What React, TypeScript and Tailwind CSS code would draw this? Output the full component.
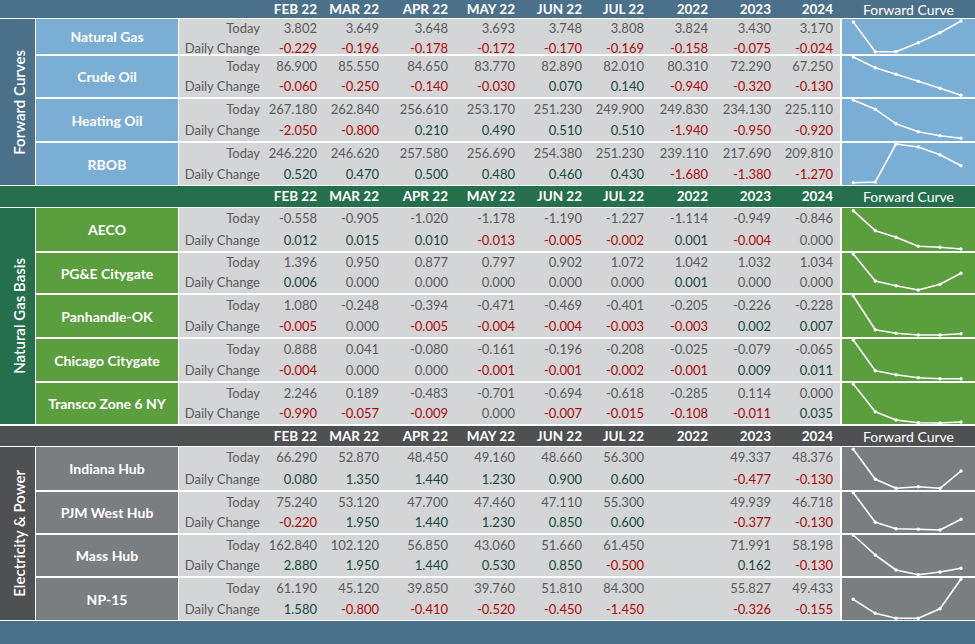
import React from "react";

type Row = {
  name: string;
  h: string;
  today: string[];
  change: string[];
  pts: number[];
};

type Section = {
  title: string;
  headH: string;
  headBg: string;
  nameBg: string;
  rowsGap: string;
  after: string;
  rows: Row[];
};

const COLW = ["w-[57px]", "w-[62px]", "w-[69px]", "w-[67px]", "w-[67px]", "w-[62px]", "w-[64px]", "w-[63px]", "w-[62px]"];
const HEADS = ["FEB 22", "MAR 22", "APR 22", "MAY 22", "JUN 22", "JUL 22", "2022", "2023", "2024"];
const XS = [11.3, 33.3, 54, 76.3, 98, 119];

const sections: Section[] = [
  {
    title: "Forward Curves",
    headH: "h-[18px]",
    headBg: "bg-[#4b7089]",
    nameBg: "bg-[#7aaed4]",
    rowsGap: "gap-[2px]",
    after: "h-px",
    rows: [
      {
        name: "Natural Gas",
        h: "h-[35px]",
        today: ["3.802", "3.649", "3.648", "3.693", "3.748", "3.808", "3.824", "3.430", "3.170"],
        change: ["-0.229", "-0.196", "-0.178", "-0.172", "-0.170", "-0.169", "-0.158", "-0.075", "-0.024"],
        pts: [3, 32.7, 32.7, 23.7, 13.7, 2],
      },
      {
        name: "Crude Oil",
        h: "h-[41px]",
        today: ["86.900", "85.550", "84.650", "83.770", "82.890", "82.010", "80.310", "72.290", "67.250"],
        change: ["-0.060", "-0.250", "-0.140", "-0.030", "0.070", "0.140", "-0.940", "-0.320", "-0.130"],
        pts: [1, 11.7, 18.3, 25.3, 32.3, 39.3],
      },
      {
        name: "Heating Oil",
        h: "h-[42px]",
        today: ["267.180", "262.840", "256.610", "253.170", "251.230", "249.900", "249.830", "234.130", "225.110"],
        change: ["-2.050", "-0.800", "0.210", "0.490", "0.510", "0.510", "-1.940", "-0.950", "-0.920"],
        pts: [1, 10.3, 24.7, 32.7, 36.7, 39.3],
      },
      {
        name: "RBOB",
        h: "h-[42px]",
        today: ["246.220", "246.620", "257.580", "256.690", "254.380", "251.230", "239.110", "217.690", "209.810"],
        change: ["0.520", "0.470", "0.500", "0.480", "0.460", "0.430", "-1.680", "-1.380", "-1.270"],
        pts: [39.7, 39, 1, 4, 11.7, 22.7],
      },
    ],
  },
  {
    title: "Natural Gas Basis",
    headH: "h-[21px]",
    headBg: "bg-[#266f4c]",
    nameBg: "bg-[#5a9e3d]",
    rowsGap: "gap-[2px]",
    after: "h-[2px]",
    rows: [
      {
        name: "AECO",
        h: "h-[43px]",
        today: ["-0.558", "-0.905", "-1.020", "-1.178", "-1.190", "-1.227", "-1.114", "-0.949", "-0.846"],
        change: ["0.012", "0.015", "0.010", "-0.013", "-0.005", "-0.002", "0.001", "-0.004", "0.000"],
        pts: [2.7, 22.7, 29.3, 38.3, 39.3, 41],
      },
      {
        name: "PG&E Citygate",
        h: "h-[40px]",
        today: ["1.396", "0.950", "0.877", "0.797", "0.902", "1.072", "1.042", "1.032", "1.034"],
        change: ["0.006", "0.000", "0.000", "0.000", "0.000", "0.000", "0.001", "0.000", "0.000"],
        pts: [1, 28, 32.7, 37, 31.3, 20.3],
      },
      {
        name: "Panhandle-OK",
        h: "h-[42px]",
        today: ["1.080", "-0.248", "-0.394", "-0.471", "-0.469", "-0.401", "-0.205", "-0.226", "-0.228"],
        change: ["-0.005", "0.000", "-0.005", "-0.004", "-0.004", "-0.003", "-0.003", "0.002", "0.007"],
        pts: [1, 34.7, 38.3, 40, 40, 38.7],
      },
      {
        name: "Chicago Citygate",
        h: "h-[42px]",
        today: ["0.888", "0.041", "-0.080", "-0.161", "-0.196", "-0.208", "-0.025", "-0.079", "-0.065"],
        change: ["-0.004", "0.000", "0.000", "-0.001", "-0.001", "-0.002", "-0.001", "0.009", "0.011"],
        pts: [1, 31.7, 35.7, 38.7, 39.7, 39.7],
      },
      {
        name: "Transco Zone 6 NY",
        h: "h-[41px]",
        today: ["2.246", "0.189", "-0.483", "-0.701", "-0.694", "-0.618", "-0.285", "0.114", "0.000"],
        change: ["-0.990", "-0.057", "-0.009", "0.000", "-0.007", "-0.015", "-0.108", "-0.011", "0.035"],
        pts: [1, 28.7, 37, 39.7, 40, 39],
      },
    ],
  },
  {
    title: "Electricity & Power",
    headH: "h-[20px]",
    headBg: "bg-[#4f5052]",
    nameBg: "bg-[#7b7e81]",
    rowsGap: "gap-[2px]",
    after: "h-px",
    rows: [
      {
        name: "Indiana Hub",
        h: "h-[43px]",
        today: ["66.290", "52.870", "48.450", "49.160", "48.660", "56.300", "", "49.337", "48.376"],
        change: ["0.080", "1.350", "1.440", "1.230", "0.900", "0.600", "", "-0.477", "-0.130"],
        pts: [2.3, 32.3, 41.3, 39.7, 41.3, 24],
      },
      {
        name: "PJM West Hub",
        h: "h-[41px]",
        today: ["75.240", "53.120", "47.700", "47.460", "47.110", "55.300", "", "49.939", "46.718"],
        change: ["-0.220", "1.950", "1.440", "1.230", "0.850", "0.600", "", "-0.377", "-0.130"],
        pts: [0.7, 30.3, 36.7, 37.3, 38, 27.3],
      },
      {
        name: "Mass Hub",
        h: "h-[41px]",
        today: ["162.840", "102.120", "56.850", "43.060", "51.660", "61.450", "", "71.991", "58.198"],
        change: ["2.880", "1.950", "1.440", "0.530", "0.850", "-0.500", "", "0.162", "-0.130"],
        pts: [0, 20, 35, 39.7, 37, 33.3],
      },
      {
        name: "NP-15",
        h: "h-[42px]",
        today: ["61.190", "45.120", "39.850", "39.760", "51.810", "84.300", "", "55.827", "49.433"],
        change: ["1.580", "-0.800", "-0.410", "-0.520", "-0.450", "-1.450", "", "-0.326", "-0.155"],
        pts: [21.3, 35.3, 40.3, 40.3, 30.7, 1],
      },
    ],
  },
];

function changeColor(v: string) {
  if (v.startsWith("-")) return "text-[#ad0a0a]";
  if (parseFloat(v) === 0) return "text-[#5b5b5b]";
  return "text-[#17483a]";
}

function Spark({ pts }: { pts: number[] }) {
  const p = pts.map((y, i) => `${XS[i]},${y}`).join(" ");
  return (
    <svg className="absolute inset-0 overflow-visible" width="133" height="42">
      <polyline points={p} fill="none" stroke="#ffffff" strokeWidth="1.6" strokeLinejoin="round" />
      {pts.map((y, i) => (
        <circle key={i} cx={XS[i]} cy={y} r="1.7" fill="#ffffff" />
      ))}
    </svg>
  );
}

function DataRow({ row, nameBg }: { row: Row; nameBg: string }) {
  return (
    <div className={`flex ${row.h}`}>
      <div className={`w-[142px] ${nameBg} flex items-center justify-center text-white font-bold text-[14px]`}>
        {row.name}
      </div>
      <div className="w-px" />
      <div className="w-[661px] bg-[#d3d5d6] flex flex-col text-[13px] text-[#595959]">
        <div className="flex-1 flex items-center">
          <div className="w-[81px] text-right">Today</div>
          {row.today.map((v, i) => (
            <div key={i} className={`${COLW[i]} text-right`}>
              {v}
            </div>
          ))}
        </div>
        <div className="flex-1 flex items-center">
          <div className="w-[81px] text-right">Daily Change</div>
          {row.change.map((v, i) => (
            <div key={i} className={`${COLW[i]} text-right ${changeColor(v)}`}>
              {v}
            </div>
          ))}
        </div>
      </div>
      <div className="w-[2px]" />
      <div className={`w-[133px] ${nameBg} relative`}>
        <Spark pts={row.pts} />
      </div>
    </div>
  );
}

function SectionBlock({ s }: { s: Section }) {
  return (
    <div className="flex flex-col">
      <div className={`flex items-center ${s.headH} ${s.headBg} text-white font-bold text-[13.5px]`}>
        <div className="w-[179px]" />
        <div className="w-[81px]" />
        {HEADS.map((h, i) => (
          <div key={h} className={`${COLW[i]} text-right`}>
            {h}
          </div>
        ))}
        <div className="w-[9px]" />
        <div className="w-[133px] text-center font-normal text-[14px]">Forward Curve</div>
      </div>
      <div className="h-px" />
      <div className="flex">
        <div className={`w-[35px] ${s.headBg} flex items-center justify-center`}>
          <div className="[writing-mode:vertical-rl] rotate-180 text-white font-semibold text-[15px] whitespace-nowrap pr-[3px]">
            {s.title}
          </div>
        </div>
        <div className="w-px" />
        <div className={`flex flex-col ${s.rowsGap}`}>
          {s.rows.map((r) => (
            <DataRow key={r.name} row={r} nameBg={s.nameBg} />
          ))}
        </div>
      </div>
      <div className={s.after} />
    </div>
  );
}

export default function App() {
  return (
    <div className="w-[975px] h-[644px] bg-white flex flex-col overflow-hidden font-['Lato','Liberation_Sans',sans-serif]">
      {sections.map((s) => (
        <SectionBlock key={s.title} s={s} />
      ))}
      <div className="flex-1 bg-[#4b7089]" />
    </div>
  );
}
